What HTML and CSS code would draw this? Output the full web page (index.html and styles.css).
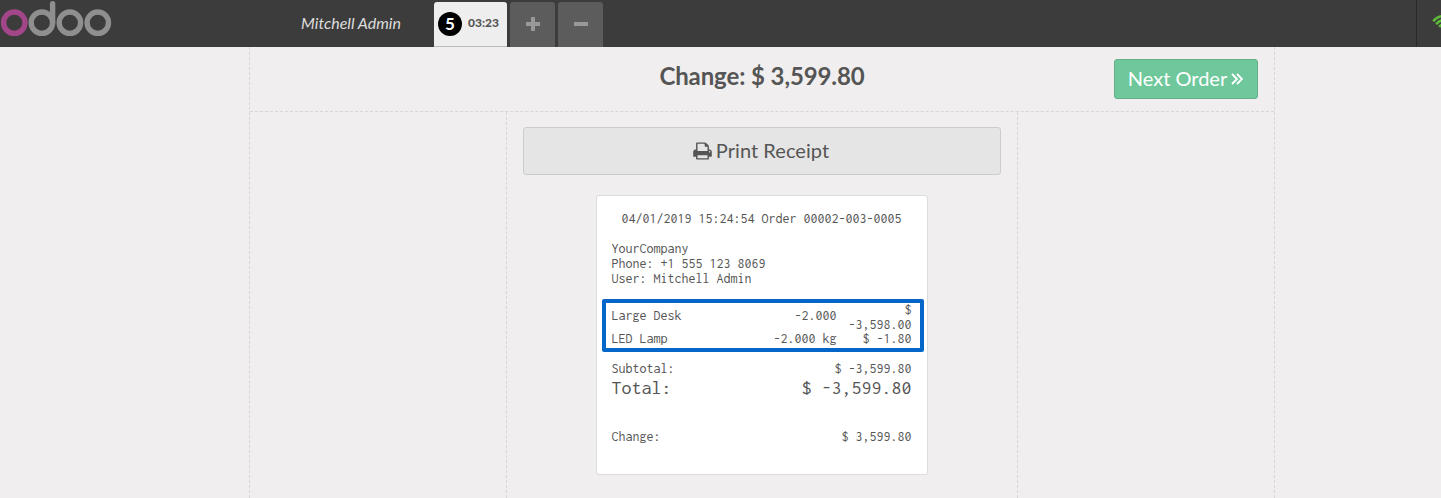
FILE: index.html
```html
<!DOCTYPE html>
<html lang="en">
<head>
<meta charset="utf-8">
<title>Point of Sale</title>
<link rel="stylesheet" href="styles.css">
</head>
<body>
<header class="topbar">
  <div class="branding">
    <svg class="logo" width="112" height="40" viewBox="0 0 112 40" fill="none" stroke-width="5.4" stroke="#8f8f8f">
      <circle cx="14.3" cy="22.7" r="10.7" stroke="#a24689"/>
      <circle cx="41.9" cy="22.7" r="10.7"/>
      <path d="M52.6 22.7V3.6" stroke-linecap="round"/>
      <circle cx="69.9" cy="22.7" r="10.7"/>
      <circle cx="97.8" cy="22.7" r="10.7"/>
    </svg>
    <span class="username">Mitchell Admin</span>
  </div>
  <nav class="orders">
    <div class="order selected"><span class="number">5</span><span class="time">03:23</span></div>
    <div class="order square"><svg width="16" height="16" viewBox="0 0 16 16"><path d="M6 1h4v5h5v4h-5v5h-4v-5h-5v-4h5z"/></svg></div>
    <div class="order square"><svg width="16" height="16" viewBox="0 0 16 16"><path d="M1 6h14v4h-14z"/></svg></div>
  </nav>
  <div class="status">
    <svg width="24" height="20" viewBox="0 0 24 20" fill="none" stroke="#5ebc39" stroke-width="2.5">
      <path d="M1.2 7.2A13.6 13.6 0 0 1 22.8 7.2M4.2 10.2A9.6 9.6 0 0 1 19.8 10.2M7.2 13A5.8 5.8 0 0 1 16.8 13"/>
    </svg>
  </div>
</header>
<main class="screen">
  <div class="heading">
    <h1>Change: $ 3,599.80</h1>
    <button class="next">Next Order
      <svg width="12" height="12" viewBox="0 0 12 12" fill="none" stroke="currentColor" stroke-width="1.9"><path d="M1 1l5 5-5 5M6 1l5 5-5 5"/></svg>
    </button>
  </div>
  <div class="columns">
    <section class="center">
      <button class="print">
        <svg width="19" height="20" viewBox="0 0 1664 1792" fill="currentColor"><path d="M384 1536h896v-256h-896v256zM384 896h896v-384h-160q-40 0-68-28t-28-68v-160h-640v640zM1536 960q0-26-19-45t-45-19-45 19-19 45 19 45 45 19 45-19 19-45zM1664 960v416q0 13-9.5 22.5t-22.5 9.5h-224v160q0 40-28 68t-68 28h-960q-40 0-68-28t-28-68v-160h-224q-13 0-22.5-9.5t-9.5-22.5v-416q0-79 56.5-135.5t135.5-56.5h64v-544q0-40 28-68t68-28h672q40 0 88 20t76 48l152 152q28 28 48 76t20 88v256h64q79 0 135.5 56.5t56.5 135.5z"/></svg>
        <span>Print Receipt</span>
      </button>
      <article class="receipt">
        <div class="order-ref">04/01/2019 15:24:54 Order 00002-003-0005</div>
        <div class="company">YourCompany<br>Phone: +1 555 123 8069<br>User: Mitchell Admin</div>
        <div class="lines">
          <div class="line"><span class="product">Large Desk</span><span class="qty">-2.000</span><span class="price">$<br>-3,598.00</span></div>
          <div class="line"><span class="product">LED Lamp</span><span class="qty">-2.000 kg</span><span class="price">$ -1.80</span></div>
        </div>
        <div class="sum"><span>Subtotal:</span><span>$ -3,599.80</span></div>
        <div class="sum total"><span>Total:</span><span>$ -3,599.80</span></div>
        <div class="sum change"><span>Change:</span><span>$ 3,599.80</span></div>
      </article>
    </section>
  </div>
</main>
</body>
</html>
```
FILE: styles.css
```css
* { box-sizing: border-box; }
body {
  margin: 0;
  height: 498px;
  overflow: hidden;
  display: flex;
  flex-direction: column;
  background: #f0eeee;
  color: #555;
  font-family: Lato, sans-serif;
}
button { font-family: inherit; color: inherit; }
.topbar {
  flex: none;
  height: 47px;
  display: flex;
  background: #3c3c3c;
  overflow: hidden;
}
.branding {
  width: 434px;
  display: flex;
  justify-content: space-between;
  padding-right: 33px;
}
.username { font-size: 16px; font-style: italic; line-height: 46px; color: #ddd; }
.orders { flex: 1; display: flex; gap: 3px; padding-top: 2px; }
.order {
  height: 45px;
  display: flex;
  align-items: center;
  border-radius: 3px 3px 0 0;
}
.selected {
  width: 73px;
  padding: 0 0 1px 4px;
  gap: 6px;
  background: #eee;
  border-bottom: 1px solid #bbb;
}
.number {
  width: 24px;
  height: 24px;
  border-radius: 50%;
  background: #000;
  color: #fff;
  font-size: 17px;
  font-weight: 700;
  line-height: 24px;
  text-align: center;
}
.time { font-size: 12px; font-weight: 900; line-height: 20px; padding-bottom: 1px; }
.square {
  width: 45px;
  padding-bottom: 1px;
  justify-content: center;
  background: #5c5c5c;
  fill: #999;
}
.status {
  width: 25px;
  padding: 14px 0 0 15px;
  border-left: 1px solid #292929;
}
.status svg { display: block; }
.screen {
  flex: 1;
  width: 1026px;
  margin-left: 249px;
  display: flex;
  flex-direction: column;
  border: dashed #d6d6d6;
  border-width: 0 1px;
}
.heading {
  height: 65px;
  display: grid;
  grid-template-columns: 1fr auto 1fr;
  border-bottom: 1px dashed #d6d6d6;
}
h1 {
  grid-column: 2;
  margin: 0;
  font-size: 24px;
  font-weight: 700;
  line-height: 58px;
  letter-spacing: -0.1px;
}
.next {
  justify-self: end;
  width: 144px;
  height: 40px;
  margin: 12px 16px 0 0;
  padding: 0 1px 2px 0;
  display: flex;
  align-items: center;
  justify-content: center;
  gap: 4px;
  font-size: 20px;
  color: #fff;
  background: #6ec89b;
  border: 1px solid #64af8a;
  border-radius: 3px;
}
.next svg { margin-top: 2px; }
.columns { flex: 1; display: flex; justify-content: center; }
.center {
  width: 512px;
  padding: 15px 16px 0;
  border: dashed #d6d6d6;
  border-width: 0 1px;
}
.print {
  width: 100%;
  height: 48px;
  padding: 0 2px 2px 0;
  display: flex;
  align-items: center;
  justify-content: center;
  gap: 4px;
  font-size: 20px;
  letter-spacing: 0.05px;
  background: #e5e5e5;
  border: 1px solid #ccc;
  border-radius: 3px;
}
.print svg { margin-top: 2px; }
.receipt {
  width: 332px;
  height: 280px;
  margin: 20px auto 0;
  padding: 15px 15.5px 15px 14.5px;
  background: #fff;
  border: 1px solid #dcdcdc;
  border-radius: 3px;
  font-family: Inconsolata, "DejaVu Sans Mono", monospace;
  font-size: 14px;
  line-height: 15px;
}
.order-ref { text-align: center; }
.company { margin: 15px 0 13px; }
.lines {
  height: 53px;
  margin: 0 -12.5px 0 -9.5px;
  padding: 0 8px 0 5.5px;
  border: 4px solid #0466c8;
  border-radius: 2px;
}
.line { display: grid; grid-template-columns: 120px 105px 75px; margin-top: -1px; }
.line:first-child .product,
.line:first-child .qty { padding-top: 6px; }
.qty, .price { text-align: right; }
.sum { display: flex; justify-content: space-between; }
.lines + .sum { margin-top: 9px; }
.total { font-size: 20px; line-height: 23px; }
.change { margin-top: 30px; }
```
